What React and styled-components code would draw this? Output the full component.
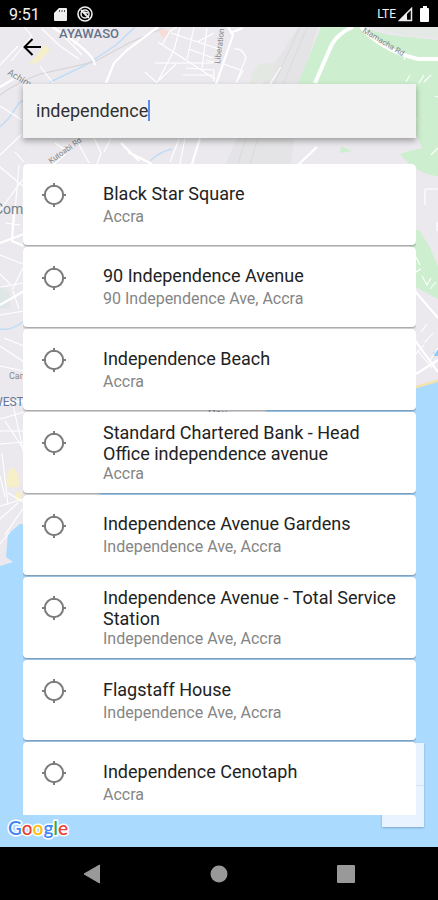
import React from "react";
import styled, { createGlobalStyle } from "styled-components";

const Global = createGlobalStyle`
  *, *::before, *::after { box-sizing: border-box; }
  body { margin: 0; background: #000; font-family: Roboto, "Liberation Sans", sans-serif; }
  button { font: inherit; border: 0; padding: 0; margin: 0; background: none; cursor: pointer; color: inherit; }
`;

const Screen = styled.div`
  display: flex;
  flex-direction: column;
  height: 100vh;
  overflow: hidden;
`;

const StatusBar = styled.header`
  display: flex;
  align-items: center;
  flex: none;
  height: 27px;
  padding: 1px 8px 0 9px;
  background: #000;
  color: #f2f2f2;
`;

const Clock = styled.time`
  font-size: 16px;
`;

const StatusIcons = styled.div`
  display: flex;
  align-items: center;
  gap: 10px;
  flex: 1;
  margin-left: 14px;
`;

const Network = styled.div`
  display: flex;
  align-items: center;
  gap: 2px;
  font-size: 12px;
`;

const Battery = styled.svg`
  margin-left: 7px;
`;

const MapArea = styled.main`
  position: relative;
  isolation: isolate;
  flex: 1;
  min-height: 0;
  display: flex;
  flex-direction: column;
  overflow: hidden;
  padding: 4px 22px 0 23px;
`;

const MapDrawing = styled.svg`
  position: absolute;
  z-index: -2;
  left: 0;
  top: 0;
  width: 100%;
  height: 100%;
`;

const ZoomControls = styled.div`
  position: absolute;
  z-index: -1;
  right: 14px;
  bottom: 20px;
  display: flex;
  flex-direction: column;
  width: 42px;
  background: #e9f3ff;
  box-shadow: 0 1px 2px #7da5c9;
`;

const ZoomButton = styled.button`
  height: 42px;
  & + & { border-top: 1px solid #d0e2f3; }
`;

const BackButton = styled.button`
  display: flex;
  flex: none;
  align-self: flex-start;
  align-items: center;
  justify-content: flex-start;
  width: 32px;
  height: 32px;
  color: #000;
`;

const SearchBox = styled.label`
  display: flex;
  align-items: center;
  flex: none;
  height: 54px;
  margin-top: 21px;
  padding: 0 13px 2px;
  background: #f2f2f2;
  box-shadow: 0 3px 6px rgba(0, 0, 0, 0.32);
`;

const SearchInput = styled.input`
  field-sizing: content;
  min-width: 0;
  padding: 0;
  border: 0;
  outline: 0;
  background: none;
  color: #303030;
  font: 18px Roboto, "Liberation Sans", sans-serif;
`;

const Caret = styled.span`
  width: 2px;
  height: 21px;
  background: #5b8def;
`;

const Results = styled.div`
  flex: 1;
  min-height: 0;
  margin-top: 26px;
  overflow: hidden;
`;

const ResultList = styled.ul`
  display: grid;
  grid-template-rows: repeat(8, 1fr);
  gap: 2px;
  min-height: 659px;
  margin: 0;
  padding: 0;
  list-style: none;
`;

const ResultCard = styled.button`
  display: flex;
  align-items: center;
  gap: 36px;
  width: 100%;
  height: 100%;
  padding: 1px 16px 0 18px;
  border-radius: 4px;
  background: #fff;
  box-shadow: 0 1px 2px rgba(0, 0, 0, 0.36);
  text-align: left;
`;

const PinIcon = styled.svg`
  flex: none;
  align-self: flex-start;
  margin-top: 17px;
`;

const ResultText = styled.span`
  display: flex;
  flex-direction: column;
  justify-content: space-between;
  min-height: 44px;
`;

const Title = styled.span`
  color: #222;
  font-size: 18px;
  line-height: 21px;
`;

const Subtitle = styled.span`
  color: #858585;
  font-size: 16px;
  line-height: 20px;
`;

const MapFooter = styled.footer`
  flex: none;
  height: 32px;
  margin-left: -15px;
`;

const Logo = styled.span`
  font: 600 19px/25px Lato, "Open Sans", sans-serif;
  paint-order: stroke fill;
  -webkit-text-stroke: 3px #fff;
`;

const Letter = styled.span`
  color: ${(p) => p.$color};
`;

const NavBar = styled.nav`
  display: flex;
  align-items: center;
  justify-content: space-around;
  flex: none;
  height: 53px;
  padding: 0 29px;
  background: #000;
`;

const NavButton = styled.button`
  display: flex;
  align-items: center;
  justify-content: center;
  width: 48px;
  height: 48px;
`;

const places = [
  ["Black Star Square", "Accra"],
  ["90 Independence Avenue", "90 Independence Ave, Accra"],
  ["Independence Beach", "Accra"],
  ["Standard Chartered Bank - Head Office independence avenue", "Accra"],
  ["Independence Avenue Gardens", "Independence Ave, Accra"],
  ["Independence Avenue - Total Service Station", "Independence Ave, Accra"],
  ["Flagstaff House", "Independence Ave, Accra"],
  ["Independence Cenotaph", "Accra"],
];

const logoLetters = [
  ["G", "#4285f4"],
  ["o", "#ea4335"],
  ["o", "#fbbc05"],
  ["g", "#4285f4"],
  ["l", "#34a853"],
  ["e", "#ea4335"],
];

function CityMap() {
  return (
    <MapDrawing viewBox="0 27 438 820" preserveAspectRatio="xMidYMid slice" aria-hidden="true">
      <rect x="-500" y="27" width="1500" height="820" fill="#ebe9ed" />
      {/* airport strip */}
      <path d="M318 27h-20L262 84 225 165h66L300 84z" fill="#e4e4e6" />
      <path d="M307 27 283 84M300 27 274 84M246 138l-8 26M258 138l-8 26" stroke="#d9dadb" fill="none" />
      <path d="M252 73l8-9 16-2-4 17-22 5z" fill="#e4e8e2" />
      {/* parks */}
      <path d="M321 27h38l30 8 49 5v136q-22-2-38-22l9-3 13-3-7-17-12-47H298z" fill="#cdeecf" />
      <path d="M372 27h66v11q-36-1-66-11z" fill="#e4e9e6" />
      <path d="M341 146l11 5-12 2zM410 230h9l10 16 9 20v33l-28-15z" fill="#cdeecf" />
      <path d="M0 285l10 6v17l-10 1z" fill="#dfe7e6" />
      {/* built-up and retail patches */}
      <path d="M34 59l11-14 5 5-12 12-10 3zM12 467l4 3 4 14-4 4-10-2 1-12zM15 492h6v8h-6z" fill="#f7efc7" />
      <path d="M158 31l8-3 3 6-6 4z" fill="#f6ddd8" />
      {/* sea */}
      <path d="M378 395l36-7 24-7" stroke="#f4e2ae" strokeWidth="3" fill="none" />
      <path d="M1000 300V847H-500V566H0l13-4-7-5 2-23 12-10h20l240-120 134-15 24-7z" fill="#abdaff" />
      <path d="M433 353l5-4v7h-4z" fill="#8fc9f8" />
      {/* streams */}
      <path d="M135 27L116 45 86 65 50 82M0 127l9-9 10-15 5-3M150 161q9-9 22-12M0 329q12 2 24-8" stroke="#bddcf6" strokeWidth="1.4" fill="none" />
      {/* railway */}
      <path d="M0 95q16-12 40-21l54-12 35-19 34-15" stroke="#d6d5d6" strokeWidth="1.3" fill="none" />
      {/* minor streets */}
      <g stroke="#fff" fill="none" strokeWidth="1.1">
        <path d="M24 27l8 9-21 25M42 29l18 17 19 13M55 27l27 28M74 45l12-17M40 66l13 17M0 65l18-19" />
        <path d="M162 45l8-14 7-4M158 42l31 20 26 17M171 33l48 16M180 27l-6 23-16 31M194 27l-7 32M207 28l-5 40M155 63h58M176 64l-20 19M186 68l28 2v12M183 75h30M206 60l11 3M145 72l11 10M197 42l17-9M189 49l24 9" />
        <path d="M234 49q9-1 12 9l-10 25M224 64l19 7-7 12M270 84l11-17" />
        <path d="M0 155l22-21M15 152l9 10M76 139l13 24M94 138l7 15-4 11M55 143l13 9-14 12M111 138l-7 14M170 162l9-23M185 138l-5 26M0 106l22 14" />
        <path d="M0 167l24 20M19 165l-5 58M0 210l24-32M5 223l15 2M0 255l23 9M11 285L0 274M12 290l11-22M0 287l24-4M0 315l24-4M0 346l24 16M4 338l20 8M13 291l6 18M0 366l24 5" />
        <path d="M0 419l24-7M0 431h24M0 444l24-2M12 400l12 55M5 421l19 29M2 453l6 52M0 506l24-7M0 519l18-16M5 535l19-28M0 544l10-12M8 493l15 9M0 476l5 21" />
        <path d="M425 189h13M425 189v16M437 222v9M416 257l4 8M422 276l5 9 4-7M430 289l6-7M416 272l5-3M421 332l6-8M424 343l9-10M417 350l15 18M424 345l-8 9M429 362l9-14M404 60l2-6M406 82l4-7M419 83l5-8M424 82l7-7M405 118l12 2M431 155l7-7M435 96l3 1" />
      </g>
      {/* main roads */}
      <g stroke="#fff" fill="none" strokeWidth="2.2">
        <path d="M158 27L127 50l-13 13-8 20M0 87l20-12M52 27q42 25 43 38M121 143l18 18M128 152l24 12M228 27l5 8-17 49M230 33l13-5M200 138l-8 26M298 165l19-18M0 243l24-9M14 210l-2 31 12 5M0 305l24-14M414 290l24 28M414 339l24 33M416 374l22-14M0 404l24-3" />
      </g>
      <path d="M353 27q-13 5-21 17l-17 39" stroke="#fff" strokeWidth="4" fill="none" />
      <path d="M361 27q20 23 57 32h20" stroke="#fff" strokeWidth="4" fill="none" />
      {/* labels */}
      <g fontFamily="Roboto, sans-serif" fill="#85878a">
        <text x="59" y="38" fontSize="13" fontWeight="500" fill="#65738a">AYAWASO</text>
        <text x="-6" y="214" fontSize="14" fill="#718489">Com</text>
        <text x="-8" y="406" fontSize="12" fill="#64799a">WEST</text>
        <text x="9" y="379" fontSize="9">Cant</text>
        <text transform="translate(7 74) rotate(31)" fontSize="9">Achimota</text>
        <text transform="translate(220 64) rotate(-83)" fontSize="8">Liberation</text>
        <text transform="translate(362 32) rotate(31)" fontSize="8">Mamacha Rd</text>
        <text transform="translate(51 164) rotate(-36)" fontSize="8">Kutoabi Rd</text>
        <text x="208" y="417" fontSize="11">Osu</text>
      </g>
    </MapDrawing>
  );
}

function Crosshair() {
  return (
    <PinIcon width="26" height="26" viewBox="0 0 26 26" fill="none" stroke="#7c7c7c" strokeWidth="2" aria-hidden="true">
      <circle cx="13" cy="13" r="9.2" />
      <path d="M13 1v4M13 21v4M1 13h4M21 13h4" />
    </PinIcon>
  );
}

export default function App() {
  return (
    <Screen>
      <Global />
      <StatusBar>
        <Clock>9:51</Clock>
        <StatusIcons>
          <svg width="13" height="15" viewBox="0 0 13 15" aria-hidden="true">
            <path d="M5 1h7q1 0 1 1v11q0 1-1 1H1q-1 0-1-1V6z" fill="#f0f0f0" />
            <path d="M5.500 3v2M8 3v2M10.500 3v2" stroke="#555" />
          </svg>
          <svg width="16" height="16" viewBox="0 0 16 16" fill="none" stroke="#f0f0f0" aria-hidden="true">
            <circle cx="8" cy="8" r="7" strokeWidth="1.600" />
            <circle cx="8" cy="8" r="4" strokeWidth="1.500" />
            <path d="M4 4l8 8M7 6l4 1" strokeWidth="1.800" />
          </svg>
        </StatusIcons>
        <Network>
          <span>LTE</span>
          <svg width="15" height="15" viewBox="0 0 15 15" aria-hidden="true">
            <path d="M13.500 1.500v12h-12z" fill="none" stroke="#eee" strokeWidth="1.500" />
            <path d="M9 5.500V14H1z" fill="#eee" />
          </svg>
        </Network>
        <Battery width="10" height="16" viewBox="0 0 10 16" aria-hidden="true">
          <path d="M3 0h4v2h1q1 0 1 1v12q0 1-1 1H1q-1 0-1-1V3q0-1 1-1h2z" fill="#fff" />
        </Battery>
      </StatusBar>
      <MapArea>
        <CityMap />
        <ZoomControls>
          <ZoomButton aria-label="Zoom in" />
          <ZoomButton aria-label="Zoom out" />
        </ZoomControls>
        <BackButton aria-label="Back">
          <svg width="19" height="18" viewBox="0 0 19 18" fill="none" stroke="currentColor" strokeWidth="2" aria-hidden="true">
            <path d="M18 9H2M9.500 1L1.500 9l8 8" />
          </svg>
        </BackButton>
        <SearchBox>
          <SearchInput aria-label="Search places" defaultValue="independence" />
          <Caret />
        </SearchBox>
        <Results>
          <ResultList>
            {places.map(([title, address]) => (
              <li key={title}>
                <ResultCard>
                  <Crosshair />
                  <ResultText>
                    <Title>{title}</Title>
                    <Subtitle>{address}</Subtitle>
                  </ResultText>
                </ResultCard>
              </li>
            ))}
          </ResultList>
        </Results>
        <MapFooter>
          <Logo>
            {logoLetters.map(([letter, color], i) => (
              <Letter key={i} $color={color}>{letter}</Letter>
            ))}
          </Logo>
        </MapFooter>
      </MapArea>
      <NavBar aria-label="System">
        <NavButton aria-label="System back">
          <svg width="18" height="20" viewBox="0 0 18 20" aria-hidden="true">
            <path d="M16.500 1v18L1 10z" fill="#999" stroke="#999" strokeLinejoin="round" />
          </svg>
        </NavButton>
        <NavButton aria-label="Home">
          <svg width="18" height="18" viewBox="0 0 18 18" aria-hidden="true">
            <circle cx="9" cy="9" r="8.500" fill="#999" />
          </svg>
        </NavButton>
        <NavButton aria-label="Recent apps">
          <svg width="18" height="18" viewBox="0 0 18 18" aria-hidden="true">
            <rect width="18" height="18" rx="1" fill="#999" />
          </svg>
        </NavButton>
      </NavBar>
    </Screen>
  );
}
